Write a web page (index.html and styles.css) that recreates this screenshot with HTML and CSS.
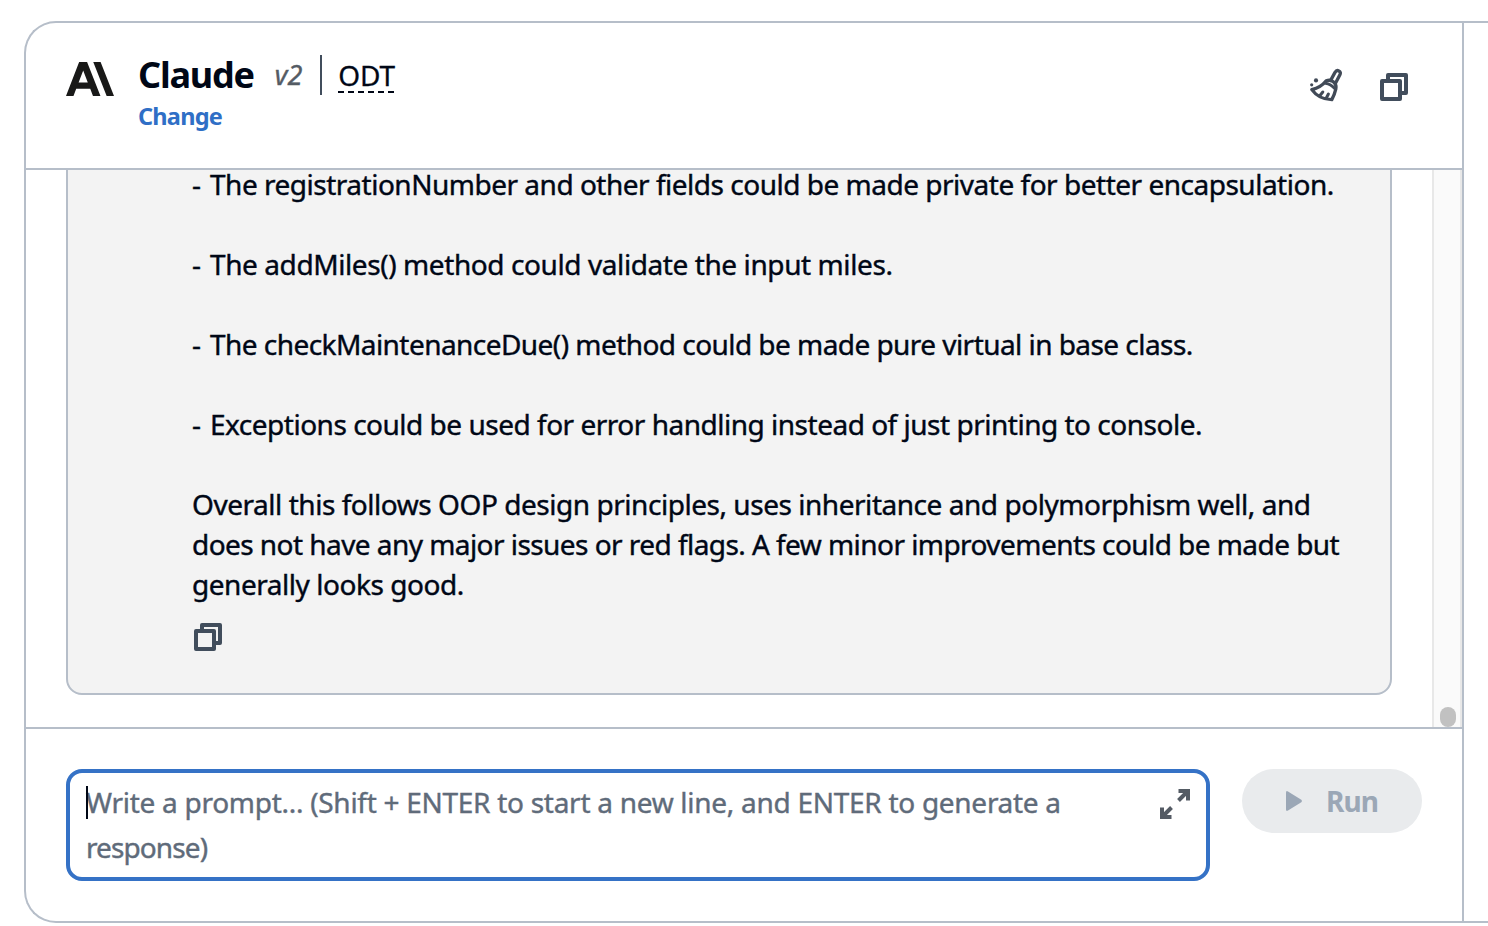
FILE: index.html
```html
<!DOCTYPE html>
<html lang="en">
<head>
<meta charset="utf-8">
<title>Chat playground</title>
<link rel="stylesheet" href="styles.css">
</head>
<body>
<main class="frame">
  <section class="panel">
    <header class="header">
      <svg class="logo" width="48" height="34" viewBox="0 3.54 24 16.92" preserveAspectRatio="none"><path fill="#191918" d="M17.3 3.54h-3.67l6.7 16.92H24ZM6.57 3.54 0 20.46h3.74l1.37-3.55h7.01l1.37 3.55h3.74L10.54 3.54Zm-.26 10.22 2.29-5.95 2.29 5.95Z"/></svg>
      <div class="model">
        <div class="title-row">
          <h1 class="name">Claude</h1>
          <span class="version">v2</span>
          <span class="tier">ODT</span>
        </div>
        <a class="change">Change</a>
      </div>
      <div class="actions">
        <svg class="broom" width="34" height="34" viewBox="0 0 34 34" fill="none" stroke="#414a57" stroke-width="3.300" stroke-linejoin="round" stroke-linecap="round">
          <path d="M21.500 12.600 26 4.400Q27.600 1.800 29.800 2.900Q32.200 4.100 30.900 6.700L26.600 15"/>
          <path d="M17.200 12.800Q21.400 11.200 24.600 14Q27.800 16.800 26.800 21.200Q25.600 26.500 22.800 31.600Q10 31.500 2.800 21.600Q12 19.500 17.200 12.800Z"/>
          <path d="M16.600 15.200Q21.800 16 25.800 20.600M11.200 27.200 13.800 24M17.200 30.300 19.400 26" stroke-width="3"/>
          <circle cx="7" cy="12.400" r="2.100" fill="#414a57" stroke="none"/><circle cx="2.700" cy="16.800" r="1.600" fill="#414a57" stroke="none"/>
        </svg>
        <svg class="copy" width="28" height="28" viewBox="0 0 28 28" fill="none" stroke="#414d5c" stroke-width="4" stroke-linejoin="round"><path d="M8 7V2h18v18h-5M2 8h18v18H2Z"/></svg>
      </div>
    </header>
    <div class="history">
      <div class="viewport">
        <article class="message">
          <p class="line l1"><span class="dash">- </span>The registrationNumber and other fields could be made private for better encapsulation.</p>
          <p class="line l2"><span class="dash">- </span>The addMiles() method could validate the input miles.</p>
          <p class="line l3"><span class="dash">- </span>The checkMaintenanceDue() method could be made pure virtual in base class.</p>
          <p class="line l4"><span class="dash">- </span>Exceptions could be used for error handling instead of just printing to console.</p>
          <p class="line last"><span class="l5">Overall this follows OOP design principles, uses inheritance and polymorphism well, and</span><br><span class="l6">does not have any major issues or red flags. A few minor improvements could be made but</span><br><span class="l7">generally looks good.</span></p>
          <svg class="copy copy-message" width="28" height="28" viewBox="0 0 28 28" fill="none" stroke="#414d5c" stroke-width="4" stroke-linejoin="round"><path d="M8 7V2h18v18h-5M2 8h18v18H2Z"/></svg>
        </article>
      </div>
      <div class="scrollbar"><div class="thumb"></div></div>
    </div>
    <footer class="composer">
      <div class="prompt">
        <span class="caret"></span>
        <div class="placeholder"><span class="p1">Write a prompt... (Shift + ENTER to start a new line, and ENTER to generate a</span><br><span class="p2">response)</span></div>
        <svg class="expand" width="30" height="30" viewBox="0 0 30 30" fill="none" stroke="#545b64" stroke-width="4"><path d="M18.500 2H28v9.500M28 2 18.500 11.500M2 18.500V28h9.500M2 28l9.500-9.500"/></svg>
      </div>
      <button class="run" disabled>
        <svg width="18" height="22" viewBox="0 0 18 22"><path fill="#9ba7b6" d="M1 2.500Q1 .2 3 1.400L16.300 9.700Q17.800 11 16.300 12.200L3 20.600Q1 21.600 1 19.500Z"/></svg>
        <span class="run-label">Run</span>
      </button>
    </footer>
  </section>
  <aside class="side"></aside>
</main>
</body>
</html>
```
FILE: styles.css
```css
* { box-sizing: border-box; }
body {
  margin: 0;
  height: 926px;
  padding: 21px 0 3px 24px;
  overflow: hidden;
  background: #fff;
  color: #000716;
  font: 28px/40px "Noto Sans", sans-serif;
}
.frame {
  display: flex;
  height: 902px;
  border: 2px solid #b6bec9;
  border-right: 0;
  border-radius: 32px 0 0 32px;
}
.panel {
  display: flex;
  flex-direction: column;
  box-sizing: content-box;
  width: 1436px;
  border-right: 2px solid #b6bec9;
}
.side { flex: 1; }
.header {
  display: flex;
  height: 147px;
  padding: 32px 54px 0 40px;
  border-bottom: 2px solid #b6bec9;
}
.logo { margin-top: 7px; }
.model { margin-left: 24px; }
.title-row { display: flex; height: 40px; align-items: flex-start; }
.name { margin: 0; font-size: 36px; line-height: 40px; font-weight: 700; letter-spacing: -1.2px; }
.version {
  height: 40px;
  margin-left: 21px;
  padding-right: 18px;
  border-right: 2px solid #414d5c;
  color: #545b64;
  font-size: 27px;
  font-style: italic;
  -webkit-text-stroke: 0.4px;
}
.tier {
  height: 38px;
  margin-left: 16px;
  line-height: 40px;
  letter-spacing: -0.2px;
  background: repeating-linear-gradient(90deg, #000716 0 6px, transparent 6px 10px) left bottom / 100% 2px no-repeat;
  -webkit-text-stroke: 0.3px;
}
.change { display: block; margin-top: 1px; color: #2f6fc6; font-size: 23.5px; font-weight: 700; letter-spacing: -0.75px; }
.actions { display: flex; margin-left: auto; gap: 37px; align-items: flex-start; }
.broom { margin-top: 13px; }
.copy { display: block; }
.actions .copy { margin-top: 18px; }
.history { display: flex; height: 559px; border-bottom: 2px solid #b6bec9; }
.viewport { width: 1406px; overflow: hidden; }
.message {
  width: 1326px;
  height: 555px;
  margin: -30px 0 0 40px;
  padding: 22px 0 0 124px;
  border: 2px solid #b6bec9;
  border-radius: 16px;
  background: #f3f3f3;
  white-space: nowrap;
  -webkit-text-stroke: 0.4px;
}
.line { margin: 0 0 40px; }
.last { margin-bottom: 0; }
.dash { display: inline-block; width: 18px; white-space: pre; }
.l1 { letter-spacing: -0.49px; }
.l2 { letter-spacing: -0.41px; }
.l3 { letter-spacing: -0.55px; }
.l4 { letter-spacing: -0.49px; }
.l5 { letter-spacing: -0.46px; }
.l6 { letter-spacing: -0.555px; }
.l7 { letter-spacing: -0.46px; }
.copy-message { margin: 19px 0 0 2px; }
.scrollbar {
  display: flex;
  width: 30px;
  padding: 0 4px 0 6px;
  border: 2px solid #e8e8e8;
  border-width: 0 2px;
  background: #fafafa;
  align-items: flex-end;
}
.thumb { width: 16px; height: 20px; border-radius: 8px; background: #c1c1c1; }
.composer { display: flex; padding: 40px; gap: 32px; align-items: flex-start; }
.prompt {
  display: flex;
  position: relative;
  width: 1144px;
  height: 112px;
  padding: 7px 16px 0;
  border: 4px solid #3572c6;
  border-radius: 16px;
  color: #5f6b7a;
  line-height: 45px;
  white-space: nowrap;
  -webkit-text-stroke: 0.4px;
}
.p1 { letter-spacing: -0.28px; }
.p2 { letter-spacing: -0.9px; }
.caret { position: absolute; left: 16px; top: 13px; width: 2px; height: 33px; background: #000716; }
.expand { margin: 9px 0 0 auto; }
.run {
  display: flex;
  width: 180px;
  height: 64px;
  margin: 0;
  padding: 0 0 0 43px;
  border: 0;
  border-radius: 32px;
  background: #e9ebed;
  color: #9ba7b6;
  font: 700 28px/64px "Noto Sans", sans-serif;
  letter-spacing: -0.9px;
  align-items: center;
}
.run-label { margin-left: 23px; }
```
